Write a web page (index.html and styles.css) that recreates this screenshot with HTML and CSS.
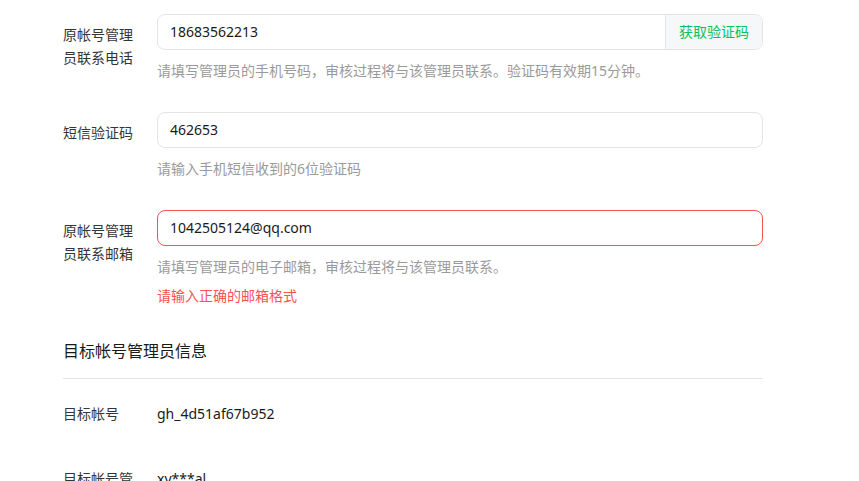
FILE: index.html
```html
<!DOCTYPE html>
<html lang="zh-CN">
<head>
<meta charset="utf-8">
<title>帐号迁移</title>
<link rel="stylesheet" href="styles.css">
</head>
<body>
<div class="page">
  <div class="form">
    <div class="row">
      <div class="label">原帐号管理员联系电话</div>
      <div class="field">
        <div class="input-group">
          <div class="input-text">18683562213</div>
          <div class="btn-code">获取验证码</div>
        </div>
        <div class="hint">请填写管理员的手机号码，审核过程将与该管理员联系。验证码有效期15分钟。</div>
      </div>
    </div>
    <div class="row">
      <div class="label">短信验证码</div>
      <div class="field">
        <div class="input-group">
          <div class="input-text">462653</div>
        </div>
        <div class="hint">请输入手机短信收到的6位验证码</div>
      </div>
    </div>
    <div class="row">
      <div class="label">原帐号管理员联系邮箱</div>
      <div class="field">
        <div class="input-group is-error">
          <div class="input-text">1042505124@qq.com</div>
        </div>
        <div class="hint">请填写管理员的电子邮箱，审核过程将与该管理员联系。</div>
        <div class="error">请输入正确的邮箱格式</div>
      </div>
    </div>
  </div>

  <div class="section">
    <h2 class="section-title">目标帐号管理员信息</h2>
    <div class="info-list">
      <div class="info-row">
        <div class="label">目标帐号</div>
        <div class="value">gh_4d51af67b952</div>
      </div>
      <div class="info-row">
        <div class="label">目标帐号管理员微信号</div>
        <div class="value">xy***al</div>
      </div>
    </div>
  </div>
</div>
</body>
</html>
```

FILE: styles.css
```css
* { box-sizing: border-box; }
html, body {
  margin: 0;
  padding: 0;
  background: #fff;
  overflow: hidden;
}
body {
  font-family: "Noto Sans", "Noto Sans CJK SC", sans-serif;
  font-size: 14px;
  color: #353535;
}
.page {
  width: 700px;
  margin-left: 63px;
  padding-top: 14px;
}
.form {
  display: flex;
  flex-direction: column;
  gap: 30px;
}
.row {
  display: flex;
}
.label {
  width: 72px;
  margin-right: 22px;
  flex-shrink: 0;
  padding-top: 9px;
  line-height: 23px;
  color: #353535;
}
.field {
  flex: 1;
  min-width: 0;
}
.input-group {
  display: flex;
  height: 36px;
  border: 1px solid #e4e4e4;
  border-radius: 8px;
  overflow: hidden;
  background: #fff;
}
.input-group.is-error {
  border-color: #fa5151;
}
.input-text {
  flex: 1;
  padding: 0 12px;
  line-height: 34px;
  color: #1a1a1a;
}
.btn-code {
  width: 97px;
  border-left: 1px solid #e4e4e4;
  background: #f6f7f8;
  color: #07c160;
  text-align: center;
  line-height: 34px;
}
.hint {
  margin-top: 10px;
  line-height: 22px;
  color: #9a9a9a;
}
.error {
  margin-top: 7px;
  line-height: 22px;
  color: #fa5151;
}
.section {
  margin-top: 32px;
}
.section-title {
  margin: 0;
  font-size: 16px;
  font-weight: normal;
  line-height: 24px;
  padding-bottom: 15px;
  border-bottom: 1px solid #e5e5e5;
  color: #1a1a1a;
}
.info-list {
  display: flex;
  flex-direction: column;
  gap: 43px;
  padding-top: 24px;
}
.info-row {
  display: flex;
}
.info-row .label {
  padding-top: 0;
  line-height: 22px;
}
.value {
  line-height: 22px;
  color: #1a1a1a;
}
```
